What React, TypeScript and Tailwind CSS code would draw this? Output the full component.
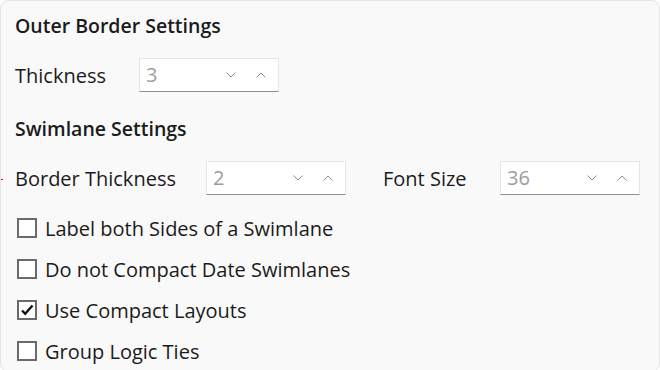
import { useState } from 'react'

function Chevron({ up }: { up?: boolean }) {
  return (
    <svg width="10" height="6" viewBox="0 0 10 6" className="text-[#8f8f8f]">
      <path
        d={up ? 'M0.5 5.5 L5 1 L9.5 5.5' : 'M0.5 0.5 L5 5 L9.5 0.5'}
        fill="none"
        stroke="currentColor"
        strokeWidth="1"
      />
    </svg>
  )
}

function NumberBox({ value }: { value: string }) {
  return (
    <div className="flex h-[34px] w-[140px] items-center border border-[#e6e6e6] border-b-[#8f8f8f] bg-white pl-[6px] pr-[12px]">
      <span className="flex-1 text-[#9b9b9b]">{value}</span>
      <div className="flex items-center gap-[20px]">
        <Chevron />
        <Chevron up />
      </div>
    </div>
  )
}

function Check({ label, checked }: { label: string; checked?: boolean }) {
  const [on, setOn] = useState(!!checked)
  return (
    <label className="flex h-[41px] cursor-pointer items-center" onClick={() => setOn(!on)}>
      <span className="ml-[2px] flex h-[20px] w-[20px] items-center justify-center border-2 border-[#6a6a6a] bg-white">
        {on && (
          <svg width="14" height="12" viewBox="0 0 14 12">
            <path d="M2 6.5 L5.2 9.8 L12.5 1.5" fill="none" stroke="#111" strokeWidth="2.4" />
          </svg>
        )}
      </span>
      <span className="ml-[8px] pt-[2px]">{label}</span>
    </label>
  )
}

export default function App() {
  return (
    <div className="h-[370px] w-[660px] bg-white" style={{ fontFamily: '"Open Sans", sans-serif' }}>
      <div className="relative flex h-[372px] flex-col rounded-lg border border-[#e5e5e5] bg-[#f9f9f9] pl-[14px] pt-[8px] text-[20px] text-[#1b1b1b]">
        <div className="flex h-[34px] items-center text-[19.5px] font-semibold">Outer Border Settings</div>

        <div className="mt-[16px] flex items-center">
          <span className="w-[124px] pt-[2px]">Thickness</span>
          <NumberBox value="3" />
        </div>

        <div className="mt-[20px] flex h-[34px] items-center text-[19.5px] font-semibold">Swimlane Settings</div>

        <div className="mt-[16px] flex items-center">
          <span className="absolute left-0 mt-[2px] h-[1px] w-[2px] bg-red-600" />
          <span className="w-[191px] pt-[2px]">Border Thickness</span>
          <NumberBox value="2" />
          <span className="ml-[37px] w-[117px] pt-[2px]">Font Size</span>
          <NumberBox value="36" />
        </div>

        <div className="mt-[12px] flex flex-col">
          <Check label="Label both Sides of a Swimlane" />
          <Check label="Do not Compact Date Swimlanes" />
          <Check label="Use Compact Layouts" checked />
          <Check label="Group Logic Ties" />
        </div>
      </div>
    </div>
  )
}
